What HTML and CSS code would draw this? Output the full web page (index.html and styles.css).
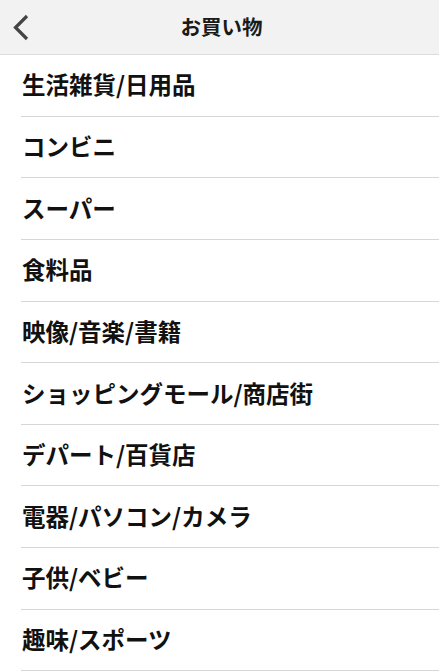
FILE: index.html
```html
<!DOCTYPE html>
<html lang="ja">
<head>
<meta charset="utf-8">
<link rel="stylesheet" href="styles.css">
</head>
<body>
<header class="bar">
  <svg class="back" width="20" height="30" viewBox="0 0 20 30"><polyline points="15,4 3.5,15.5 15,27" fill="none" stroke="#444" stroke-width="3.2"/></svg>
  <h1 class="title">お買い物</h1>
</header>
<ul class="list">
  <li class="item">生活雑貨/日用品</li>
  <li class="item">コンビニ</li>
  <li class="item">スーパー</li>
  <li class="item">食料品</li>
  <li class="item">映像/音楽/書籍</li>
  <li class="item">ショッピングモール/商店街</li>
  <li class="item">デパート/百貨店</li>
  <li class="item">電器/パソコン/カメラ</li>
  <li class="item">子供/ベビー</li>
  <li class="item">趣味/スポーツ</li>
</ul>
</body>
</html>
```
FILE: styles.css
```css
html, body {
  margin: 0;
  padding: 0;
  background: #fff;
  font-family: "Noto Sans CJK JP", "Noto Sans", sans-serif;
  color: #111;
}
.bar {
  height: 55px;
  box-sizing: border-box;
  background: #f2f2f2;
  border-bottom: 1px solid #dcdcdc;
  display: flex;
  align-items: center;
  justify-content: center;
  position: relative;
}
.back {
  position: absolute;
  left: 12px;
  top: 12px;
}
.title {
  margin: 0 0 2px 4px;
  font-size: 20.5px;
  font-weight: 700;
  color: #1a1a1a;
  line-height: 1;
}
.list {
  list-style: none;
  margin: 0;
  padding: 0 0 0 21px;
}
.item {
  height: 61.65px;
  box-sizing: border-box;
  border-bottom: 1px solid #d6d6d6;
  display: flex;
  align-items: center;
  font-size: 23.5px;
  font-weight: 700;
  padding-left: 1px;
  padding-bottom: 2px;
  color: #111;
}
```
